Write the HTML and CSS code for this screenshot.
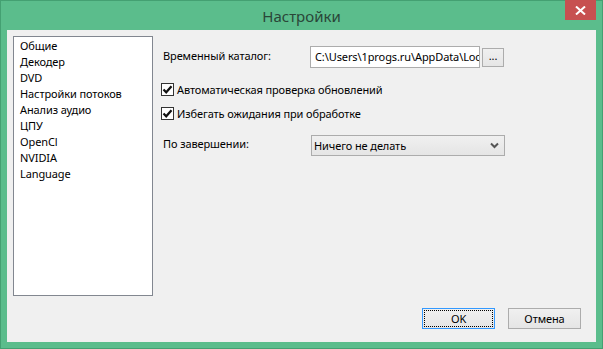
FILE: index.html
```html
<!DOCTYPE html>
<html lang="ru">
<head>
    <meta charset="UTF-8">
    <title>Настройки</title>
    <link rel="stylesheet" href="styles.css">
</head>
<body>
<div class="window">
    <div class="titlebar">
        <div class="title">Настройки</div>
        <div class="close">
            <svg width="11" height="9" viewBox="0 0 11 9"><path d="M1 0.5 L10 8.5 M10 0.5 L1 8.5" stroke="#fff" stroke-width="2"/></svg>
        </div>
    </div>
    <div class="content">
        <ul class="pages">
            <li>Общие</li>
            <li>Декодер</li>
            <li>DVD</li>
            <li>Настройки потоков</li>
            <li>Анализ аудио</li>
            <li>ЦПУ</li>
            <li>OpenCl</li>
            <li>NVIDIA</li>
            <li>Language</li>
        </ul>
        <div class="form">
            <div class="row">
                <span class="label">Временный каталог:</span>
                <span class="path"><span>C:\Users\1progs.ru\AppData\Local</span></span>
                <span class="browse">...</span>
            </div>
            <div class="check first">
                <span class="box"><svg width="11" height="11" viewBox="0 0 11 11"><path d="M1.5 5.5 L4.2 8.3 L9.5 2.2" fill="none" stroke="#111" stroke-width="2.2"/></svg></span>
                Автоматическая проверка обновлений
            </div>
            <div class="check">
                <span class="box"><svg width="11" height="11" viewBox="0 0 11 11"><path d="M1.5 5.5 L4.2 8.3 L9.5 2.2" fill="none" stroke="#111" stroke-width="2.2"/></svg></span>
                Избегать ожидания при обработке
            </div>
            <div class="row finish">
                <span class="label">По завершении:</span>
                <span class="select">
                    Ничего не делать
                    <svg width="9" height="7" viewBox="0 0 9 7"><path d="M1 1.5 L4.5 5 L8 1.5" fill="none" stroke="#555" stroke-width="2"/></svg>
                </span>
            </div>
        </div>
        <div class="buttons">
            <button class="btn ok"><span>OK</span></button>
            <button class="btn">Отмена</button>
        </div>
    </div>
</div>
</body>
</html>
```

FILE: styles.css
```css
body {
    margin: 0;
    font-family: "Noto Sans", "Open Sans", sans-serif;
    font-size: 11px;
    letter-spacing: -0.1px;
    color: #000;
}

.window {
    width: 603px;
    height: 349px;
    box-sizing: border-box;
    border: 1px solid #44a072;
    background: #5bbd8c;
    display: flex;
    flex-direction: column;
}

.titlebar {
    height: 29px;
    display: flex;
}

.title {
    flex: 1;
    padding-left: 37px;
    text-align: center;
    font-size: 15px;
    letter-spacing: 0;
    line-height: 30px;
    color: #2a4638;
}

.close {
    width: 31px;
    height: 20px;
    margin-right: 6px;
    margin-top: -1px;
    background: #c75050;
    display: flex;
    align-items: center;
    justify-content: center;
}

.content {
    flex: 1;
    margin: 0 6px 6px;
    background: #f0f0f0;
    padding: 6px 15px 13px 6px;
    display: grid;
    grid-template-columns: 140px 1fr;
    grid-template-rows: 1fr 21px;
    row-gap: 12px;
}

.pages {
    margin: 0;
    padding: 1px 0 0 6px;
    list-style: none;
    background: #fff;
    border: 1px solid #828790;
    line-height: 16px;
}

.form {
    padding: 10px 0 0 10px;
}

.row {
    display: flex;
    align-items: center;
}

.label {
    width: 147px;
    margin-top: -4px;
}

.path {
    width: 164px;
    height: 20px;
    line-height: 20px;
    padding-left: 4px;
    border: 1px solid #acacac;
    background: #fff;
    overflow: hidden;
}

.path span {
    display: block;
    width: 200px;
    white-space: nowrap;
}

.browse {
    width: 20px;
    height: 17px;
    margin-left: 2px;
    border: 1px solid #acacac;
    background: linear-gradient(#f0f0f0, #e5e5e5);
    text-align: center;
    line-height: 13px;
}

.check {
    display: flex;
    align-items: center;
    height: 13px;
    margin-top: 11px;
    margin-left: -2px;
}

.check.first {
    margin-top: 15px;
}

.box {
    width: 11px;
    height: 11px;
    border: 1px solid #333;
    background: #fff;
    margin-right: 3px;
    display: flex;
}

.finish {
    margin-top: 15px;
}

.finish .label {
    width: 148px;
}

.select {
    width: 185px;
    height: 19px;
    padding: 0 5px 0 2px;
    border: 1px solid #acacac;
    background: linear-gradient(#f0f0f0, #e5e5e5);
    display: flex;
    align-items: center;
    justify-content: space-between;
}

.buttons {
    grid-column: 1 / 3;
    display: flex;
    justify-content: flex-end;
    gap: 13px;
}

.btn {
    width: 73px;
    height: 21px;
    padding: 0;
    border: 1px solid #acacac;
    background: linear-gradient(#f0f0f0, #e5e5e5);
    font-family: inherit;
    font-size: 11px;
    letter-spacing: -0.1px;
}

.btn.ok {
    border-color: #3399ff;
    padding: 1px;
}

.btn.ok span {
    display: block;
    height: 100%;
    box-sizing: border-box;
    border: 1px dotted #000;
    line-height: 15px;
}
```
